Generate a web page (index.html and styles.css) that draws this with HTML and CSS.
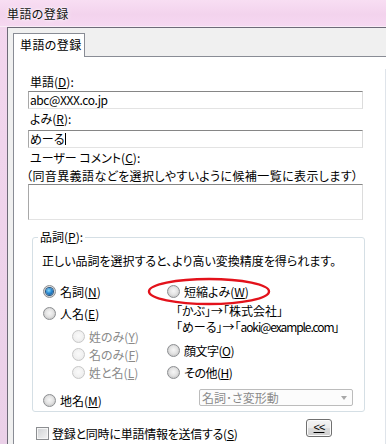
FILE: index.html
```html
<!DOCTYPE html>
<html lang="ja">
<head>
<meta charset="utf-8">
<title>単語の登録</title>
<link rel="stylesheet" href="styles.css">
</head>
<body>
<div class="window">
  <div class="titlebar"><span class="title">単語の登録</span></div>
  <div class="client">
    <div class="tabs"><div class="tab">単語の登録</div></div>
    <div class="panel">
      <div class="form">
        <div class="label l1">単語(<u>D</u>):</div>
        <div class="input"><span class="mail">abc@XXX.co.jp</span></div>
        <div class="label l2">よみ(<u>R</u>):</div>
        <div class="input"><span>めーる</span><span class="caret"></span></div>
        <div class="label l3">ユーザー コメント(<u>C</u>):</div>
        <div class="label l4">（同音異義語などを選択しやすいように候補一覧に表示します）</div>
        <div class="textarea"></div>
        <fieldset class="group">
          <legend>品詞(<u>P</u>):</legend>
          <div class="desc">正しい品詞を選択すると、より高い変換精度を得られます。</div>
          <div class="cols">
            <div class="col">
              <div class="opt"><span class="radio"><span class="dot"></span></span><span>名詞(<u>N</u>)</span></div>
              <div class="opt r2"><span class="radio"></span><span>人名(<u>E</u>)</span></div>
              <div class="opt sub r3"><span class="radio off"></span><span>姓のみ(<u>Y</u>)</span></div>
              <div class="opt sub"><span class="radio off"></span><span>名のみ(<u>F</u>)</span></div>
              <div class="opt sub"><span class="radio off"></span><span>姓と名(<u>L</u>)</span></div>
              <div class="opt r6"><span class="radio"></span><span>地名(<u>M</u>)</span></div>
            </div>
            <div class="col">
              <div class="opt mark"><span class="radio"></span><span>短縮よみ(<u>W</u>)</span>
                <svg class="ellipse" width="124" height="29" viewBox="0 0 124 29"><ellipse cx="62" cy="14.5" rx="60" ry="12.5" fill="none" stroke="#e3121b" stroke-width="2.4"/></svg>
              </div>
              <div class="examples">
                <div>「かぶ」→「株式会社」</div>
                <div>「めーる」→「<span class="latin">aoki@example.com</span>」</div>
              </div>
              <div class="opt k1"><span class="radio"></span><span class="tight">顔文字(<u>O</u>)</span></div>
              <div class="opt k2"><span class="radio"></span><span class="tight">その他(<u>H</u>)</span></div>
              <div class="combo"><span>名詞･さ変形動</span><span class="arrow"></span></div>
            </div>
          </div>
        </fieldset>
        <div class="bottom">
          <div class="check-label"><span class="checkbox"></span><span class="send">登録と同時に単語情報を送信する(<u>S</u>)</span></div>
          <div class="btn"><u>&lt;&lt;</u></div>
        </div>
      </div>
      <div class="edge"></div>
    </div>
  </div>
</div>
</body>
</html>
```
FILE: styles.css
```css
* { box-sizing: border-box; }
html, body { margin: 0; padding: 0; }
body {
  width: 386px;
  height: 444px;
  overflow: hidden;
  font-family: "Noto Sans CJK JP", "Noto Sans", sans-serif;
  font-size: 12px;
  color: #000;
  font-feature-settings: "palt";
}
u { text-underline-offset: 1px; }

.window {
  height: 444px;
  display: flex;
  flex-direction: column;
  background: linear-gradient(180deg, #f3d6ee, #ead0e8);
}
.titlebar {
  height: 27px;
  flex: none;
  border-bottom: 1px solid #f9ecf6;
  padding-left: 7px;
  display: flex;
  align-items: center;
  background: linear-gradient(180deg, #f8def3 0%, #f3d3ed 55%, #f6d8f1 100%);
}
.title {
  color: #111;
  letter-spacing: 0.4px;
  text-shadow: 0 0 5px #fff, 0 0 2px #fff;
}
.client {
  flex: 1;
  margin-left: 7px;
  border-left: 1px solid #6e6a78;
  border-top: 1px solid #6e6a78;
  background: #f0f0f0;
  padding: 5px 0 0 5px;
  display: flex;
  flex-direction: column;
}
.tabs {
  display: flex;
  position: relative;
  z-index: 1;
  margin-bottom: -1px;
}
.tab {
  width: 72px;
  height: 24px;
  border: 1px solid #898c95;
  border-bottom: none;
  background: #fff;
  padding-left: 6px;
  line-height: 22px;
  letter-spacing: 0.4px;
  white-space: nowrap;
}
.panel {
  flex: 1;
  display: flex;
  background: #fff;
  border-left: 1px solid #898c95;
  border-top: 1px solid #898c95;
}
.form {
  width: 335px;
  margin-left: 14px;
  padding-top: 17px;
  flex: none;
}
.edge {
  margin-left: auto;
  margin-top: 12px;
  width: 1px;
  background: #dfe4ea;
}
.label {
  line-height: 16px;
  height: 16px;
  padding-left: 2px;
  white-space: nowrap;
}
.l2 { margin-top: 2px; margin-bottom: 3px; }
.l3 { margin-top: 2px; }
.l4 { margin-top: 2px; padding-left: 0; margin-left: -2px; letter-spacing: 0.4px; }
.input, .textarea {
  height: 18px;
  border: 1px solid;
  border-color: #868686 #dcdcdc #e3e3e3 #a8a8a8;
  padding-left: 1px;
  line-height: 16px;
  display: flex;
  align-items: center;
}
.input { margin-top: 1px; }
.mail { letter-spacing: -0.4px; }
.textarea { height: 36px; }
.caret {
  display: inline-block;
  width: 1px;
  height: 12px;
  background: #000;
}

.group {
  margin: 9px 0 0 4px;
  width: 333px;
  min-width: 0;
  border: 1px solid #d5dfe5;
  border-radius: 3px;
  padding: 8px 0 2px 10px;
}
.group legend {
  padding: 0 2px;
  margin-left: -5px;
  line-height: 16px;
  height: 16px;
}
.desc {
  line-height: 16px;
  margin-left: -1px;
  white-space: nowrap;
}
.cols {
  display: grid;
  grid-template-columns: 124px 1fr;
  margin-top: 13px;
}
.col {
  display: flex;
  flex-direction: column;
}
.opt {
  display: flex;
  align-items: center;
  gap: 4px;
  height: 18px;
  white-space: nowrap;
}
.tight { letter-spacing: -0.5px; }
.r2 { margin-top: 4px; }
.r3 { margin-top: 5px; }
.sub { margin-left: 29px; color: #8a8a8a; }
.r6 { margin-top: 10px; }
.k1 { margin-top: 6px; }
.k2 { margin-top: 4px; }
.mark { position: relative; }
.ellipse {
  position: absolute;
  left: -20px;
  top: -5px;
}
.examples {
  margin-top: 3px;
  padding-left: 9px;
  line-height: 16px;
  white-space: nowrap;
}
.latin { letter-spacing: -1.1px; }
.radio {
  flex: none;
  width: 13px;
  height: 13px;
  border-radius: 50%;
  border: 1px solid #8c8e91;
  background: radial-gradient(circle at 50% 45%, #f6f6f6 0, #e4e4e4 45%, #cfcfcf 70%, #f8f8f8 90%);
  display: flex;
  align-items: center;
  justify-content: center;
}
.radio.off {
  border-color: #c8c8c8;
  background: radial-gradient(circle at 50% 45%, #fafafa 0, #f0f0f0 60%, #e6e6e6 80%, #fbfbfb 95%);
}
.dot {
  width: 7px;
  height: 7px;
  border-radius: 50%;
  background: radial-gradient(circle at 40% 35%, #8adaf8 0, #2a8ad4 45%, #0c4682 100%);
  box-shadow: 0 0 0 1px #27557f;
}
.combo {
  margin: 8px 0 0 32px;
  width: 154px;
  height: 17px;
  border: 1px solid #bcbcbc;
  border-radius: 2px;
  background: #fcfcfc;
  display: flex;
  align-items: center;
  padding-left: 2px;
  color: #8a8a8a;
  white-space: nowrap;
}
.arrow {
  margin-left: auto;
  margin-right: 5px;
  width: 0;
  height: 0;
  border-left: 3.5px solid transparent;
  border-right: 3.5px solid transparent;
  border-top: 4px solid #a8a8a8;
}
.bottom {
  display: flex;
  align-items: flex-start;
  margin-top: 7px;
}
.check-label {
  display: flex;
  align-items: center;
  gap: 3px;
  height: 18px;
  margin-top: 5px;
  margin-left: 8px;
  white-space: nowrap;
}
.send { letter-spacing: -0.25px; }
.checkbox {
  flex: none;
  width: 13px;
  height: 13px;
  border: 1px solid #8c8e91;
  background: linear-gradient(135deg, #cfd1d4, #f4f4f4);
  box-shadow: inset 0 0 0 1px #f6f6f6;
}
.btn {
  margin-left: auto;
  margin-right: 31px;
  width: 26px;
  height: 18px;
  border: 1px solid #707070;
  border-radius: 3px;
  background: linear-gradient(180deg, #f4f4f4 0%, #ebebeb 50%, #dddddd 50%, #cfcfcf 100%);
  box-shadow: inset 0 0 0 1px #fbfbfb;
  font-family: "Liberation Sans", sans-serif;
  font-size: 11px;
  line-height: 15px;
  letter-spacing: -1px;
  text-align: center;
}
```
